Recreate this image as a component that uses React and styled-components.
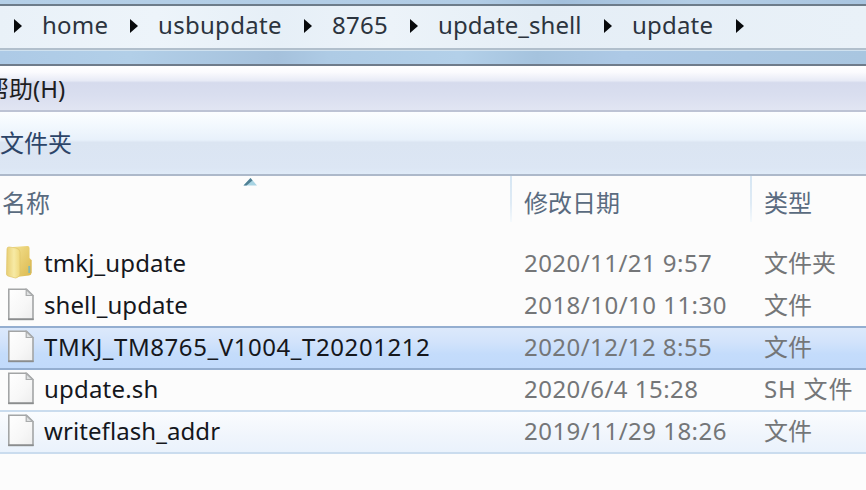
import React from "react";
import styled, { createGlobalStyle } from "styled-components";

const GlobalStyle = createGlobalStyle`
  * { box-sizing: border-box; }
  body {
    margin: 0;
    overflow: hidden;
    background: #fcfcfc;
    font-family: "Noto Sans", "Noto Sans CJK SC", sans-serif;
    font-size: 24px;
    line-height: 34px;
  }
`;

const Window = styled.div`
  width: 866px;
  height: 490px;
  overflow: hidden;
  display: flex;
  flex-direction: column;
  background: #fcfcfc;
`;

const GlassTop = styled.div`
  flex: none;
  height: 4px;
  background: linear-gradient(90deg, #b4cfe7, #b1cce5 55%, #a3c0dc 65%, #b3cde5 80%, #a9c5e0);
`;

const AddressBar = styled.nav`
  flex: none;
  height: 46px;
  display: flex;
  align-items: flex-start;
  padding: 3px 0 0 13px;
  border-top: 2px solid #6d7c8a;
  border-bottom: 2px solid #b1bfcc;
  background: linear-gradient(90deg, #e9f1f8, #edf4fa 18%, #e6eff7 32%, #ecf3f9 45%, #e5eef6 62%, #e9f1f8);
  color: #2c343e;
`;

const Crumb = styled.span`
  flex: none;
  width: ${(p) => p.$width}px;
  margin-top: -1px;
  white-space: pre;
  letter-spacing: ${(p) => p.$track || 0}px;
`;

const CrumbArrow = styled.svg`
  flex: none;
  width: 10px;
  height: 16px;
  margin: 9px 19px 0 0;
`;

const GlassStrip = styled.div`
  flex: none;
  height: 16px;
  border-top: 1px solid #cfe1ef;
  border-bottom: 2px solid #6f7c8b;
  background: linear-gradient(90deg, #adcae6, #b2cfe8 15%, #a5c1dc 32%, #aecbe5 38%, #b3d0e9 53%, #a5c3de 62%, #adc9e6 72%, #a9c6e0);
`;

const MenuBar = styled.div`
  flex: none;
  height: 46px;
  padding-top: 6px;
  border-bottom: 2px solid #bdc3d4;
  background: linear-gradient(#ffffff 0%, #fbfbfe 14%, #e8ebf6 33%, #d6dbed 38%, #d9deef 65%, #e1e5f3 100%);
  color: #1e1e22;
`;

const MenuItem = styled.span`
  display: block;
  width: 100px;
  margin-left: -15px;
  white-space: nowrap;
`;

const Toolbar = styled.div`
  flex: none;
  height: 64px;
  padding-top: 14px;
  border-bottom: 2px solid #adb9ca;
  background: linear-gradient(#fcfeff 0%, #f3f9fe 20%, #e8f1fb 45%, #dbe5f2 49%, #dce6f4 90%, #dfebf8 100%);
  color: #2c4468;
`;

const gridColumns = "511px 240px 1fr";

const Header = styled.div`
  flex: none;
  height: 66px;
  display: grid;
  grid-template-columns: ${gridColumns};
  color: #5a6b80;
`;

const HeaderCell = styled.div`
  position: relative;
  padding: 10px 0 0 ${(p) => (p.$first ? 2 : 13)}px;

  &::after {
    content: "";
    display: ${(p) => (p.$last ? "none" : "block")};
    position: absolute;
    top: 0;
    right: -1px;
    width: 2px;
    height: 46px;
    background: linear-gradient(#d6e6f3, #dfebf5 60%, #f5f9fc);
  }
`;

const SortArrow = styled.svg`
  position: absolute;
  left: 243px;
  top: 1px;
  width: 15px;
  height: 10px;
`;

const rowFill = {
  selected: "linear-gradient(#dce9fb 0%, #d2e3fb 35%, #c4dcfb 65%, #c1dafb 100%)",
  hover: "linear-gradient(#fafcfe, #f0f5fc 60%, #eaf2fc)",
};
const rowEdge = { selected: "#94aed0", hover: "#cadcee" };

const FileRow = styled.div`
  flex: none;
  height: 44px;
  margin-bottom: -2px;
  display: grid;
  grid-template-columns: ${gridColumns};
  border: solid ${(p) => rowEdge[p.$state] || "transparent"};
  border-width: 2px 0;
  background: ${(p) => rowFill[p.$state] || "none"};
  background-clip: padding-box;
`;

const NameCell = styled.div`
  display: flex;
  padding-left: 5px;
  color: #15171c;
`;

const FileName = styled.span`
  margin: 2px 0 0 10px;
  white-space: nowrap;
  letter-spacing: ${(p) => p.$track || 0}px;
`;

const InfoCell = styled.div`
  padding: 2px 0 0 13px;
  white-space: nowrap;
  color: #747678;
  letter-spacing: ${(p) => p.$track || 0}px;
`;

const IconSvg = styled.svg`
  flex: none;
  width: 29px;
  height: 36px;
`;

function FileIcon() {
  return (
    <IconSvg viewBox="0 0 29 36">
      <defs>
        <linearGradient id="paper" x1="0" y1="0" x2="1" y2="1">
          <stop offset="0" stopColor="#fff" />
          <stop offset="0.6" stopColor="#f7f7f7" />
          <stop offset="1" stopColor="#ededed" />
        </linearGradient>
      </defs>
      <path d="M3.800 3.200H21.500L28 9.500V33.300H3.800Z" fill="url(#paper)" stroke="#a3a5a6" strokeWidth="1.6" />
      <path d="M3.200 33.300H28.600" stroke="#8b8d8e" strokeWidth="1.800" />
      <path d="M21.200 3.500V9.500H27.600Z" fill="#dfe1e2" stroke="#a9abac" strokeWidth="1.2" />
    </IconSvg>
  );
}

function FolderIcon() {
  return (
    <IconSvg viewBox="0 0 29 36">
      <defs>
        <linearGradient id="front" x1="0" y1="0" x2="1" y2="0">
          <stop offset="0" stopColor="#e8ce73" />
          <stop offset="0.55" stopColor="#f7eaa5" />
          <stop offset="1" stopColor="#efd87c" />
        </linearGradient>
        <linearGradient id="back" x1="0" y1="0" x2="1" y2="1">
          <stop offset="0" stopColor="#f3e191" />
          <stop offset="1" stopColor="#dcb94e" />
        </linearGradient>
      </defs>
      <path d="M8 3L22.500 2Q24.500 2 24.500 4V14L26.500 16V29Q26.500 31 24 31.500L11 33Z" fill="url(#back)" />
      <path d="M2 5Q2 3 4 3L11 4Q15 5 15 8V30Q15 32.500 12 33.500L10.500 34L3 32Q1.500 31.500 1.500 30Z" fill="url(#front)" stroke="#e0c468" strokeWidth="0.7" />
      <path d="M24.300 22V29" stroke="#81b9b4" strokeWidth="2" />
      <path d="M26 16V29" stroke="#d8b552" strokeWidth="0.8" />
    </IconSvg>
  );
}

const crumbs = [
  { text: "home", width: 87, track: 0.2 },
  { text: "usbupdate", width: 145, track: 0.3 },
  { text: "8765", width: 77, track: 0.3 },
  { text: "update_shell", width: 165, track: 0.05 },
  { text: "update", width: 103, track: 0.2 },
];

const files = [
  { name: "tmkj_update", track: 0.12, date: "2020/11/21 9:57", dateTrack: 0.45, type: "文件夹", folder: true },
  { name: "shell_update", track: 0.08, date: "2018/10/10 11:30", dateTrack: 0.48, type: "文件" },
  { name: "TMKJ_TM8765_V1004_T20201212", track: 0.57, date: "2020/12/12 8:55", dateTrack: 0.45, type: "文件", state: "selected" },
  { name: "update.sh", track: 0.2, date: "2020/6/4 15:28", dateTrack: 0.48, type: "SH 文件", typeTrack: 0.8 },
  { name: "writeflash_addr", track: 0.08, date: "2019/11/29 18:26", dateTrack: 0.48, type: "文件", state: "hover" },
];

function Arrow() {
  return (
    <CrumbArrow viewBox="0 0 10 16">
      <path d="M1 1L9 8L1 15Z" fill="#080a0c" />
    </CrumbArrow>
  );
}

export default function App() {
  return (
    <Window>
      <GlobalStyle />
      <GlassTop />
      <AddressBar>
        <Arrow />
        {crumbs.map((c) => (
          <React.Fragment key={c.text}>
            <Crumb $width={c.width} $track={c.track}>{c.text}</Crumb>
            <Arrow />
          </React.Fragment>
        ))}
      </AddressBar>
      <GlassStrip />
      <MenuBar>
        <MenuItem>帮助(H)</MenuItem>
      </MenuBar>
      <Toolbar>文件夹</Toolbar>
      <Header>
        <HeaderCell $first>
          名称
          <SortArrow viewBox="0 0 15 10">
            <path d="M0.500 8.500L7.500 1L14 8.500Z" fill="#a8d4e3" />
            <path d="M0.500 8.500L7.500 1L9.500 3.500L3.500 8.500Z" fill="#4f7f93" />
          </SortArrow>
        </HeaderCell>
        <HeaderCell>修改日期</HeaderCell>
        <HeaderCell $last>类型</HeaderCell>
      </Header>
      {files.map((f) => (
        <FileRow key={f.name} $state={f.state}>
          <NameCell>
            {f.folder ? <FolderIcon /> : <FileIcon />}
            <FileName $track={f.track}>{f.name}</FileName>
          </NameCell>
          <InfoCell $track={f.dateTrack}>{f.date}</InfoCell>
          <InfoCell $track={f.typeTrack}>{f.type}</InfoCell>
        </FileRow>
      ))}
    </Window>
  );
}
